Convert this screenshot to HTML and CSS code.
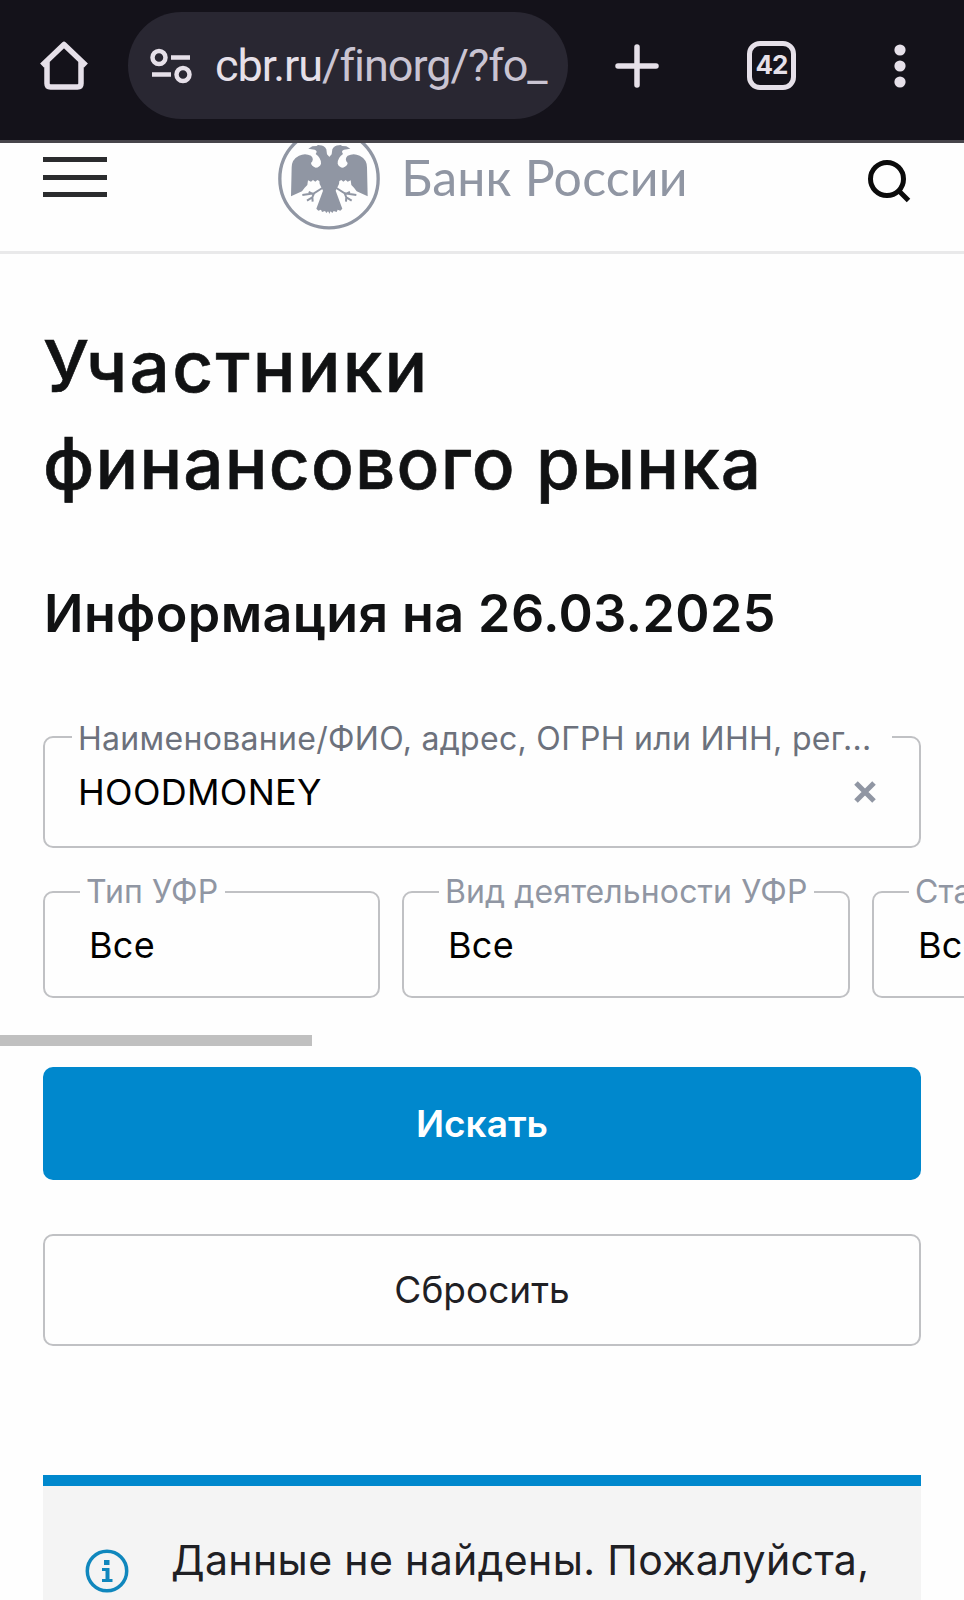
FILE: index.html
```html
<!DOCTYPE html>
<html lang="ru">
<head>
    <meta charset="UTF-8">
    <meta name="viewport" content="width=device-width, initial-scale=1.0">
    <title>Участники финансового рынка | Банк России</title>
    <link rel="stylesheet" href="styles.css">
</head>
<body>

<div class="browser-bar">
    <svg class="icon-home" width="50" height="50" viewBox="0 0 50 50">
        <path d="M3 24.500 L25 3.500 L47 24.500 M8 21 V42.500 Q8 46 11.500 46 H38.500 Q42 46 42 42.500 V21" />
    </svg>
    <div class="url">
        <svg class="icon-site" width="42" height="36" viewBox="0 0 42 36">
            <circle cx="9" cy="9.500" r="6.500" />
            <circle cx="33" cy="26.500" r="6.500" />
            <path d="M21 9.500 H40 M2 26.500 H21" />
        </svg>
        <span class="url-text"><span class="domain">cbr.ru</span>/finorg/?fo_</span>
    </div>
    <svg class="icon-plus" width="44" height="44" viewBox="0 0 44 44">
        <path d="M3 22 H41 M22 3 V41" />
    </svg>
    <div class="tabs">42</div>
    <svg class="icon-dots" width="12" height="46" viewBox="0 0 12 46">
        <circle cx="6" cy="7" r="5.600" />
        <circle cx="6" cy="23" r="5.600" />
        <circle cx="6" cy="39" r="5.600" />
    </svg>
</div>

<header class="header">
    <div class="burger"><span></span><span></span><span></span></div>
    <div class="logo">
        <svg width="102" height="87" viewBox="25 39 306 261">
            <circle cx="178" cy="146" r="147.500" />
            <g id="half">
                <path d="M180 82 L172 73 L170 58 Q164 46 150 46 Q144 44 141 48 L128 49 L116 56 L135 59 Q145 62 138 72 Q155 84 154 101 Q150 112 138 113 Q125 109 124 99 Q135 87 124 77 Q106 68 88 77 Q66 88 66 112 L64 199 L97 184 L105 173 L113 165 L115 151 L124 155 L130 150 L137 155 L143 150 L149 153 L150 162 L160 182 L140 236 L146 242 L154 239 L157 246 L166 243 L170 249 L175 244 L180 251 Z" />
                <path class="leg" d="M158 174 L133 190 L98 195 M133 190 L128 202 L112 212 M128 200 L129 215 M128 191 L117 186" />
            </g>
            <use href="#half" transform="matrix(-1 0 0 1 358 0)" />
        </svg>
        <span class="logo-text">Банк России</span>
    </div>
    <svg class="icon-search" width="44" height="44" viewBox="0 0 44 44">
        <circle cx="20" cy="20" r="16.500" />
        <path d="M31 31 L41.500 41.500" />
    </svg>
</header>

<main class="content">
    <h1><span class="line1">Участники</span><br><span class="line2">финансового рынка</span></h1>
    <h2>Информация на 26.03.2025</h2>

    <form>
        <div class="field">
            <label>Наименование/ФИО, адрес, ОГРН или ИНН, рег...</label>
            <span class="value">HOODMONEY</span>
            <svg class="clear" width="22" height="22" viewBox="0 0 22 22">
                <path d="M2 2 L20 20 M20 2 L2 20" />
            </svg>
        </div>

        <div class="filters">
            <div class="select type">
                <label>Тип УФР</label>
                <span class="value">Все</span>
            </div>
            <div class="select activity">
                <label>Вид деятельности УФР</label>
                <span class="value">Все</span>
            </div>
            <div class="select status">
                <label>Статус</label>
                <span class="value">Все</span>
            </div>
        </div>
        <div class="scrollbar"></div>

        <button type="button" class="button primary">Искать</button>
        <button type="button" class="button reset">Сбросить</button>
    </form>

    <div class="notice">
        <svg width="44" height="44" viewBox="0 0 44 44">
            <circle cx="22" cy="22" r="19.700" />
            <path d="M19 11 H24.500 V16 H19 Z M17 19 H24.500 V30 H27.500 V33 H17 V30 H20.500 V22 H17 Z" />
        </svg>
        <p>Данные не найдены. Пожалуйста,</p>
    </div>
</main>

</body>
</html>
```
FILE: styles.css
```css
* {
    box-sizing: border-box;
}
html {
    overflow: hidden;
}
body {
    margin: 0;
    height: 1600px;
    overflow: hidden;
    background-color: #fefefe;
    color: #111213;
    font-family: Inter, "Noto Sans", sans-serif;
}
svg {
    display: block;
    flex: none;
}

/* браузер */
.browser-bar {
    display: flex;
    align-items: center;
    height: 143px;
    padding: 0 58px 9px 39px;
    background-color: #14121a;
    border-bottom: 3px solid #47454b;
}
.icon-home, .icon-plus, .icon-site {
    fill: none;
    stroke: #e6e0e9;
    stroke-width: 5.5;
}
.icon-plus {
    margin-left: 47px;
    stroke-linecap: round;
}
.icon-home {
    stroke-linejoin: round;
}
.icon-site {
    stroke-width: 4.5;
}
.url {
    display: flex;
    align-items: center;
    width: 440px;
    height: 107px;
    margin-left: 39px;
    padding-left: 22px;
    border-radius: 54px;
    background-color: #292732;
}
.url-text {
    margin-left: 23px;
    font-family: Roboto, sans-serif;
    font-size: 45px;
    letter-spacing: -1.05px;
    white-space: nowrap;
    color: #c9c4d2;
}
.domain {
    color: #e6e0e9;
}
.tabs {
    width: 49px;
    height: 49px;
    margin-left: 88px;
    border: 5.500px solid #e6e0e9;
    border-radius: 13px;
    color: #e6e0e9;
    font-size: 26px;
    font-weight: 700;
    letter-spacing: -1px;
    line-height: 38px;
    text-align: center;
}
.icon-dots {
    margin-left: auto;
    fill: #e6e0e9;
}

/* шапка */
.header {
    display: flex;
    justify-content: space-between;
    height: 111px;
    padding: 0 53px 0 43px;
    border-bottom: 3px solid #e9e9ea;
}
.burger {
    display: flex;
    flex-direction: column;
    gap: 12.500px;
    width: 64px;
    padding-top: 14px;
}
.burger span {
    height: 5px;
    background-color: #2b2c2e;
}
.logo {
    display: flex;
    margin-left: -8px;
    color: #9096a3;
}
.logo circle {
    fill: none;
    stroke: #9096a3;
    stroke-width: 10;
}
.logo path {
    fill: #9096a3;
}
.logo .leg {
    fill: none;
    stroke: #9096a3;
    stroke-width: 6;
}
.logo-text {
    margin-left: 21px;
    font-family: Lato, sans-serif;
    font-size: 50px;
    letter-spacing: 0.2px;
    line-height: 68px;
    white-space: nowrap;
}
.icon-search {
    margin-top: 16px;
    fill: none;
    stroke: #0b0b0b;
    stroke-width: 5;
}

/* содержимое */
.content {
    padding: 0 43px;
}
h1 {
    margin: 64px 0 0;
    font-size: 71px;
    font-weight: 500;
    line-height: 97px;
    -webkit-text-stroke: 0.6px #111213;
}
.line1 {
    letter-spacing: 2.3px;
}
.line2 {
    letter-spacing: 1.2px;
}
h2 {
    margin: 69px 0 0 1px;
    font-size: 52px;
    font-weight: 600;
    letter-spacing: 0.4px;
    line-height: 66px;
}
.field, .select {
    position: relative;
    display: flex;
    flex: none;
    border: 2px solid #c0c1c4;
    border-radius: 10px;
    color: #000;
    font-size: 36px;
    letter-spacing: 0.3px;
}
.field {
    height: 112px;
    margin-top: 89px;
    padding: 32px 43px 0 33px;
    justify-content: space-between;
}
.value {
    line-height: 44px;
}
.clear {
    margin-top: 11px;
    fill: none;
    stroke: #9096a3;
    stroke-width: 5;
}
/* подпись лежит поверх рамки */
.field label, .select label {
    position: absolute;
    top: -21px;
    padding: 0 7px;
    background-color: #fefefe;
    color: #9096a3;
    font-size: 32px;
    letter-spacing: 0.1px;
    line-height: 40px;
    white-space: nowrap;
}
.field label {
    top: -19px;
    left: 27px;
    width: 820px;
    padding-left: 6px;
    letter-spacing: 0.3px;
    color: #6c717c;
}
.filters {
    display: flex;
    gap: 22px;
    margin: 43px -43px 0 0;
}
.select {
    height: 107px;
    padding: 30px 0 0 44px;
}
.select label {
    left: 35px;
    padding-left: 6px;
}
.type {
    width: 337px;
}
.activity {
    width: 448px;
}
.status {
    width: 300px;
}
.scrollbar {
    width: 312px;
    height: 11px;
    margin: 37px 0 21px -43px;
    background-color: #c0c0c0;
}
.button {
    display: block;
    width: 100%;
    height: 113px;
    border: none;
    border-radius: 10px;
    font-family: inherit;
    font-size: 37px;
}
.primary {
    background-color: #0088cd;
    color: #fff;
    font-weight: 600;
}
.reset {
    height: 112px;
    margin-top: 54px;
    padding-bottom: 3px;
    border: 2px solid #c0c1c4;
    background-color: #fefefe;
    color: #1f2024;
}
.notice {
    display: flex;
    margin-top: 129px;
    height: 200px;
    padding: 63px 42px 0;
    border-top: 11px solid #0088cd;
    background-color: #f4f4f4;
}
.notice circle {
    fill: none;
    stroke: #1087bd;
    stroke-width: 3.5;
}
.notice path {
    fill: #1087bd;
}
.notice p {
    margin: -14px 0 0 42px;
    color: #1f2024;
    font-size: 41px;
    letter-spacing: 0.37px;
    line-height: 50px;
    white-space: nowrap;
}
```
